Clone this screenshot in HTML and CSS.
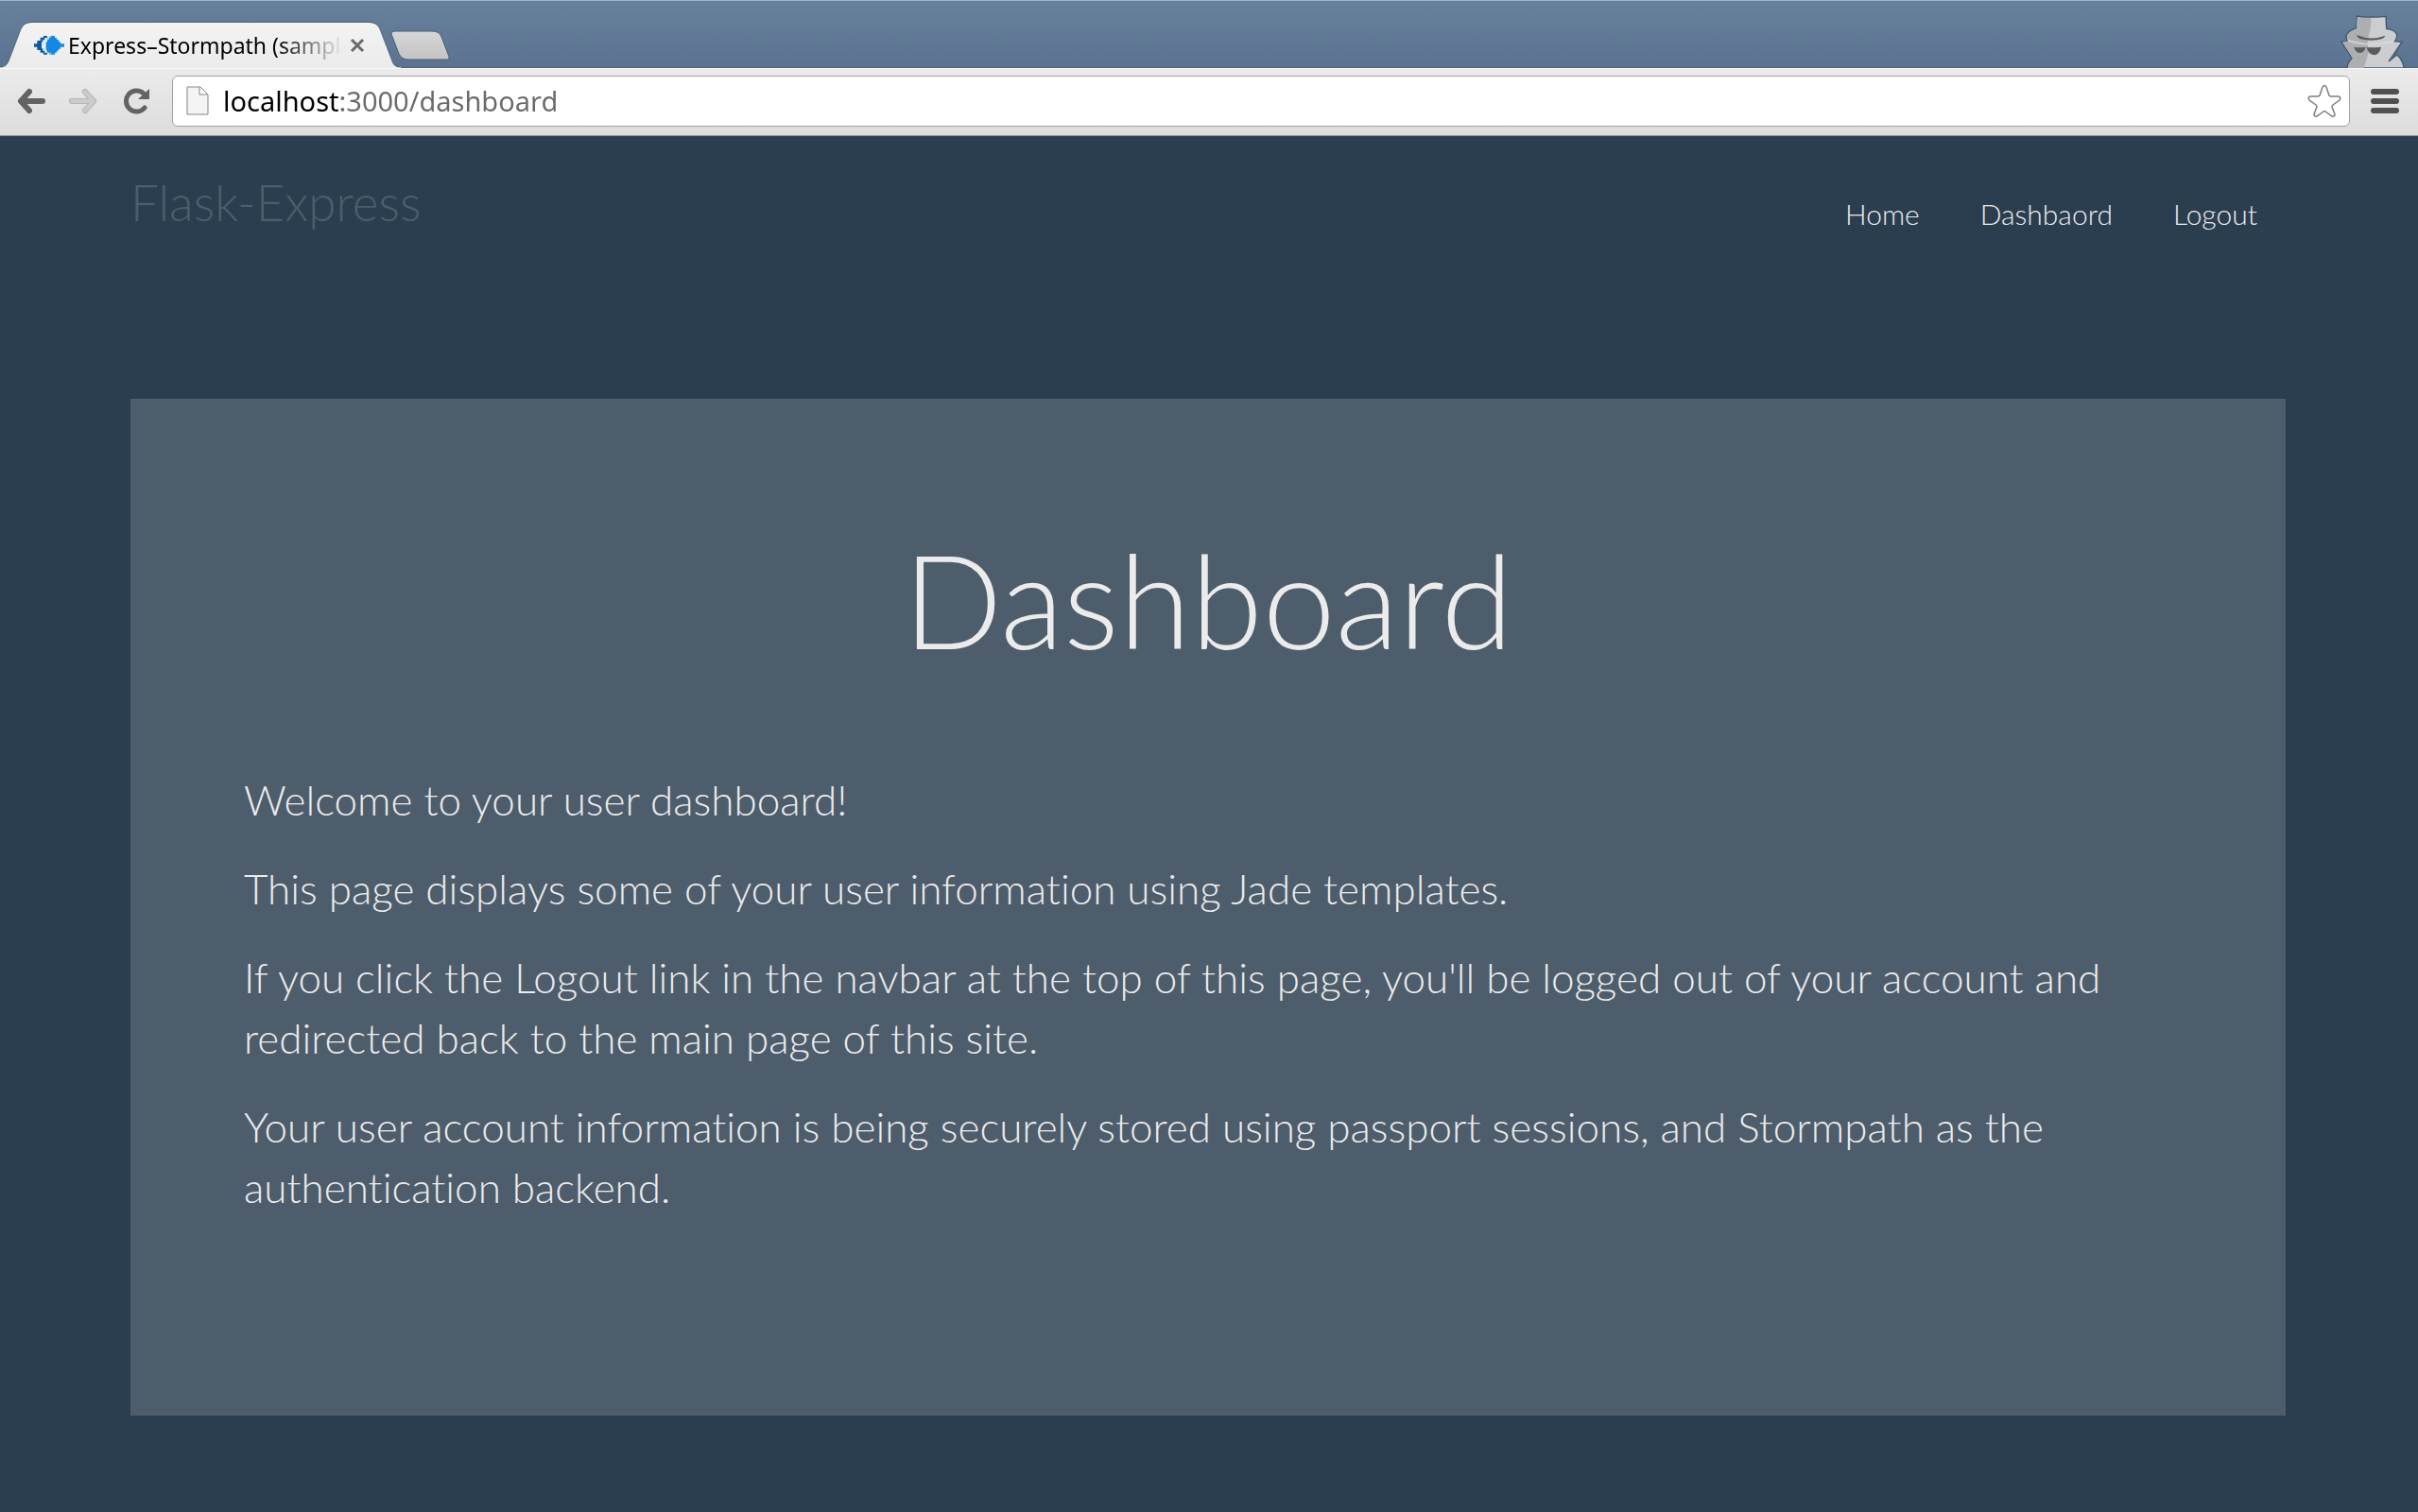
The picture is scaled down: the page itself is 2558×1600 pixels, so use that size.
FILE: index.html
```html
<!DOCTYPE html>
<html lang="en">
<head>
<meta charset="utf-8">
<title>Express-Stormpath (sample)</title>
<link rel="stylesheet" href="styles.css">
</head>
<body>
<div class="browser">
  <div class="tabstrip">
    <div class="tab">
      <svg class="tab-shape" width="424" height="49" viewBox="0 0 424 49" aria-hidden="true">
        <defs><linearGradient id="tabFill" x1="0" y1="0" x2="0" y2="1"><stop offset="0" stop-color="#f3f3f3"/><stop offset="1" stop-color="#ebebeb"/></linearGradient></defs>
        <path d="M0 49V48H2Q7 47 9 42L22 8Q25 1 33 1H391Q399 1 402 8L415 42Q417 48 423 48H424V49Z" fill="url(#tabFill)"/>
        <path d="M0 48H2Q7 47 9 42L22 8Q25 0.500 33 0.500H391Q399 0.500 402 8L415 42Q417 48 423 48" fill="none" stroke="#44566b" stroke-opacity=".7"/>
      </svg>
      <svg class="favicon" width="32" height="22" viewBox="0 0 96 66" aria-hidden="true">
        <path d="M0 28H10V18H20V8H30V3H42V9H34V15H28V22H24V42H28V50H34V56H42V62H30V56H20V48H10V38H0Z" fill="#0c5a9f"/>
        <path d="M48 3H66V9H72V15H78V22H84V28H96V38H84V44H78V50H72V56H66V62H48V56H42V50H38V22H42V15H48Z" fill="#1588e6"/>
        <path d="M48 3H54V9H48ZM42 9H48V15H42ZM48 56H54V62H48Z" fill="#8fc6f2"/>
        <path d="M36 9H42V15H36ZM30 15H38V22H30ZM26 22H33V44H26ZM30 44H38V50H30ZM36 50H42V56H36Z" fill="#dcebf8"/>
      </svg>
      <span class="tab-title">Express–Stormpath (sampl</span>
      <button class="tab-close" aria-label="Close tab"><svg width="16" height="16" viewBox="0 0 16 16"><path d="M2 2L14 14M14 2L2 14" stroke="#6a6a6a" stroke-width="3"/></svg></button>
    </div>
    <button class="new-tab" aria-label="New tab"><svg width="64" height="33" viewBox="0 0 64 33">
      <defs><linearGradient id="newFill" x1="0" y1="0" x2="0" y2="1"><stop offset="0" stop-color="#d6d6d6"/><stop offset="1" stop-color="#c4c4c4"/></linearGradient></defs>
      <path d="M4 1H44Q52 1 54 7L62 28Q63 31 60 31H19Q12 31 9 25L1 4Q1 1 4 1Z" fill="url(#newFill)" stroke="#4d5f73"/></svg></button>
    <svg class="incognito" width="70" height="57" viewBox="290 45 210 171" aria-hidden="true">
      <path d="M342 51Q365 56 388 54Q412 55 434 52L436 91Q470 97 469 114Q469 123 462 131L485 133L443 195L469 174Q486 188 492 216H311Q313 200 327 185L293 132L313 131Q303 116 315 103Q324 94 340 90Z" fill="#cbcdd0" stroke="#43556b" stroke-width="4"/>
      <path d="M343 54Q365 58 388 56Q387 90 376 127L378 170L364 216H313Q315 200 329 185L297 134L317 130Q307 116 317 104Q325 96 341 91Z" fill="#acaeb1"/>
      <path d="M313 124Q345 136 388 137Q430 136 462 127L460 133Q430 143 388 143Q340 143 313 132Z" fill="#dddee0" opacity=".6"/>
      <path d="M342 111Q386 131 431 113Q431 119 420 124Q386 133 351 123Q342 118 342 111Z" fill="#595b5e"/>
      <path d="M333 149Q350 152 370 150Q366 167 352 168Q337 166 333 149ZM373 150Q398 152 419 149Q414 174 396 175Q377 171 373 150Z" fill="#595b5e"/>
      <path d="M484 136L443 195L466 176Z" fill="#56667a"/>
    </svg>
  </div>
  <div class="toolbar">
    <button class="tool" aria-label="Back"><svg width="32" height="28" viewBox="0 0 32 28"><path d="M14 4L5 14L14 24M5 14H28" fill="none" stroke="#636363" stroke-width="6" stroke-linecap="round" stroke-linejoin="round"/></svg></button>
    <button class="tool" aria-label="Forward" disabled><svg width="32" height="28" viewBox="0 0 32 28"><path d="M18 4L27 14L18 24M27 14H4" fill="none" stroke="#b6b6b6" stroke-width="6" stroke-linecap="round" stroke-linejoin="round"/><path d="M18 4L27 14L18 24M27 14H4" fill="none" stroke="#cbcbcb" stroke-width="4" stroke-linecap="round" stroke-linejoin="round"/></svg></button>
    <button class="tool" aria-label="Reload"><svg width="28" height="28" viewBox="0 0 28 28"><path d="M22 21A11 11 0 1 1 21 6" fill="none" stroke="#636363" stroke-width="5" stroke-linecap="round"/><path d="M27 1V12H15Z" fill="#636363"/></svg></button>
    <form class="omnibox">
      <svg width="24" height="32" viewBox="0 0 24 32" aria-hidden="true"><path d="M1 1H15L23 9V30H1Z" fill="#f4f4f4" stroke="#858585"/><path d="M14 1V9H22" fill="#fff" stroke="#858585"/></svg>
      <input class="url" type="text" aria-label="Address" value="localhost:3000/dashboard">
      <button class="star" type="button" aria-label="Bookmark"><svg width="36" height="36" viewBox="0 0 36 36"><path d="M16 3Q18 0 20 3L23 12Q24 13 25 13L33 13Q36 14 34 17L27 22Q26 23 26 24L29 32Q29 35 26 34L19 29Q18 28 17 29L10 34Q7 35 7 32L10 24Q10 23 9 22L2 17Q0 14 3 13L11 13Q12 13 13 12Z" fill="#fff" stroke="#7d7d7d" stroke-width="1.500"/></svg></button>
    </form>
    <button class="menu" aria-label="Menu"><svg width="30" height="26" viewBox="0 0 30 26"><path d="M3 3H27M3 13H27M3 23H27" stroke="#505050" stroke-width="6" stroke-linecap="round"/></svg></button>
  </div>
</div>
<div class="container">
  <header class="navbar">
    <a class="brand" href="#">Flask-Express</a>
    <nav class="nav">
      <a href="#">Home</a>
      <a href="#">Dashbaord</a>
      <a href="#">Logout</a>
    </nav>
  </header>
  <main class="jumbotron">
    <h1>Dashboard</h1>
    <p>Welcome to your user dashboard!</p>
    <p>This page displays some of your user information using Jade templates.</p>
    <p>If you click the Logout link in the navbar at the top of this page, you'll be logged out of your account and redirected back to the main page of this site.</p>
    <p>Your user account information is being securely stored using passport sessions, and Stormpath as the authentication backend.</p>
  </main>
</div>
</body>
</html>
```

FILE: styles.css
```css
* { box-sizing: border-box; }
body {
  margin: 0;
  min-height: 100vh;
  background: #2b3e50;
  color: #ebebeb;
  font-family: "Lato", sans-serif;
  font-weight: 300;
  font-variant-ligatures: none;
}
button {
  display: block;
  padding: 0;
  border: 0;
  background: none;
}
svg { display: block; flex: none; }

/* Browser window */
.browser { font-family: "Noto Sans", sans-serif; font-weight: 400; }
.tabstrip {
  display: flex;
  height: 72px;
  padding-top: 23px;
  border-top: 1px solid #a3b4c6;
  background: linear-gradient(#67809c, #5b7390);
  box-shadow: inset 0 -1px 0 #4d6078;
}
.tab {
  position: relative;
  display: flex;
  align-items: center;
  width: 413px;
  height: 48px;
  padding-left: 36px;
}
.tab-shape { position: absolute; left: 0; top: -1px; }
.favicon, .tab-title, .tab-close { position: relative; }
.tab-title {
  width: 292px;
  margin-left: 4px;
  white-space: nowrap;
  color: #000;
  font-size: 23px;
  line-height: 32px;
  -webkit-mask-image: linear-gradient(to right, #000 220px, transparent);
  mask-image: linear-gradient(to right, #000 220px, transparent);
}
.tab-close { margin-left: 6px; }
.new-tab { margin-top: 8px; align-self: flex-start; }
.incognito { margin-left: auto; margin-right: 12px; align-self: flex-end; }
.toolbar {
  display: flex;
  align-items: center;
  height: 72px;
  padding: 0 20px 2px 17px;
  border-top: 1px solid #fafafa;
  border-bottom: 1px solid #959595;
  background: linear-gradient(#ebebeb, #dcdcdc);
}
.tool { margin-right: 23px; }
.tool:nth-child(2) { margin-right: 27px; }
.omnibox {
  display: flex;
  flex: 1;
  align-items: center;
  height: 54px;
  padding: 0 8px 0 14px;
  border: 1px solid #a0a0a0;
  border-radius: 6px;
  background: #fff;
}
.url {
  flex: 1;
  height: 40px;
  margin: 0 0 0 15px;
  padding: 0;
  border: 0;
  outline: 0;
  color: transparent;
  background: linear-gradient(to right, #000 122px, #6a6a6a 122px);
  -webkit-background-clip: text;
  background-clip: text;
  font: 29px/40px "Noto Sans", sans-serif;
}
.menu { margin-left: 22px; }

/* Page */
.container { padding: 0 140px 0 138px; }
.navbar {
  display: flex;
  justify-content: space-between;
  padding: 39px 30px 0 0;
  height: 278px;
}
.brand {
  height: 62px;
  color: #4e5d6c;
  font-size: 53px;
  line-height: 62px;
  text-decoration: none;
}
.nav { display: flex; gap: 64px; padding-top: 23px; }
.nav a {
  height: 40px;
  color: #ebebeb;
  font-size: 30px;
  line-height: 40px;
  text-decoration: none;
}
.jumbotron {
  padding: 138px 120px 180px;
  background: #4e5d6c;
}
.jumbotron h1 {
  margin: 0 0 106px;
  font-size: 138px;
  font-weight: 300;
  line-height: 148px;
  text-align: center;
}
.jumbotron p {
  margin: 0 0 30px;
  font-size: 44px;
  line-height: 64px;
}
```
